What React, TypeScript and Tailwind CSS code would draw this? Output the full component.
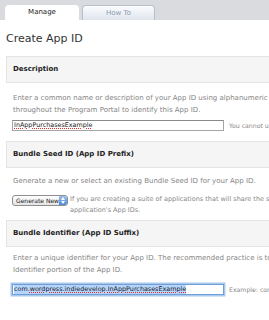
const font = { fontFamily: '"DejaVu Sans", "Liberation Sans", sans-serif' };

function SectionHeader({ title }: { title: string }) {
  return (
    <div className="ml-[6px] h-[27px] bg-[#f5f5f5] border border-r-0 border-[#e4e4e4] flex items-center pl-[6px]">
      <span className="text-[7px] font-bold text-[#222]">{title}</span>
    </div>
  );
}

function Squiggle({ children }: { children: string }) {
  return (
    <span className="underline decoration-dotted decoration-[#e03030] underline-offset-[1px]">
      {children}
    </span>
  );
}

export default function App() {
  return (
    <div className="w-[269px] h-[320px] overflow-hidden bg-white whitespace-nowrap" style={font}>
      {/* tabs */}
      <div className="h-[20px] bg-[#d9dbde] flex items-end pl-[5px] gap-[3px]">
        <div className="w-[74px] h-[15px] bg-white rounded-t-[4px] flex items-center justify-center text-[7px] text-[#222]">
          Manage
        </div>
        <div className="w-[73px] h-[15px] rounded-t-[4px] border border-b-0 border-[#b8c0cc] bg-gradient-to-b from-[#fbfcfd] to-[#dfe5ee] flex items-center justify-center text-[7px] text-[#8b9ab3]">
          How To
        </div>
      </div>

      <div className="pt-[13px] pl-[6px] text-[11px] leading-[12px] text-[#333]">Create App ID</div>

      {/* Description */}
      <div className="mt-[11px]">
        <SectionHeader title="Description" />
        <div className="pl-[13px] mt-[9px] text-[7px] leading-[12px] text-[#858585]">
          <div>
            Enter a common name or description of your App ID using alphanumeric characters. The description you specify will be used
          </div>
          <div>throughout the Program Portal to identify this App ID.</div>
        </div>
        <div className="pl-[12px] mt-[4px] flex items-center">
          <div className="w-[212px] h-[11px] shrink-0 border border-[#a5a5a5] border-t-[#8a8a8a] bg-white flex items-center pl-[1px] text-[6.4px] text-[#222]">
            <Squiggle>InAppPurchasesExample</Squiggle>
          </div>
          <span className="ml-[5px] text-[6.2px] text-[#888]">You cannot use special characters</span>
        </div>
      </div>

      {/* Bundle Seed */}
      <div className="mt-[10px]">
        <SectionHeader title="Bundle Seed ID (App ID Prefix)" />
        <div className="pl-[13px] mt-[7px] text-[7px] leading-[12px] text-[#858585]">
          Generate a new or select an existing Bundle Seed ID for your App ID.
        </div>
        <div className="pl-[12px] mt-[8px] flex items-start">
          <div className="w-[56px] h-[11px] shrink-0 rounded-[3px] border border-[#8f8f8f] bg-gradient-to-b from-white to-[#e4e4e4] flex items-center overflow-hidden">
            <span className="pl-[3px] text-[6px] text-[#222] flex-1">Generate New</span>
            <div className="w-[8px] h-full shrink-0 rounded-r-[2px] bg-gradient-to-b from-[#9cc2ef] to-[#4a88dc] flex flex-col items-center justify-center gap-[1px]">
              <svg width="4" height="3" viewBox="0 0 4 3"><path d="M0 3 L2 0 L4 3 Z" fill="#fff" /></svg>
              <svg width="4" height="3" viewBox="0 0 4 3"><path d="M0 0 L2 3 L4 0 Z" fill="#fff" /></svg>
            </div>
          </div>
          <div className="ml-[2px] -mt-[1px] text-[6.5px] leading-[11px] text-[#888]">
            <div>If you are creating a suite of applications that will share the same Keychain access, use the same Bundle Seed ID for each of your</div>
            <div>application's App IDs.</div>
          </div>
        </div>
      </div>

      {/* Bundle Identifier */}
      <div className="mt-[4px]">
        <SectionHeader title="Bundle Identifier (App ID Suffix)" />
        <div className="pl-[13px] mt-[5px] text-[7px] leading-[12px] text-[#858585]">
          <div>
            Enter a unique identifier for your App ID. The recommended practice is to use a reverse-domain name style string for the Bundle
          </div>
          <div>Identifier portion of the App ID.</div>
        </div>
        <div className="pl-[12px] mt-[8px] flex items-center">
          <div className="w-[212px] h-[11px] shrink-0 border border-[#6f9fd6] bg-white flex items-center pl-[1px] text-[6.4px] text-[#222] shadow-[0_0_0_1.5px_#a9c8ee]">
            <span className="bg-[#b5d5ff]">
              com.<Squiggle>wordpress</Squiggle>.<Squiggle>indiedevelop</Squiggle>.<Squiggle>InAppPurchasesExample</Squiggle>
            </span>
          </div>
          <span className="ml-[5px] text-[6.2px] text-[#888]">Example: com.domainname.appname</span>
        </div>
      </div>
    </div>
  );
}
